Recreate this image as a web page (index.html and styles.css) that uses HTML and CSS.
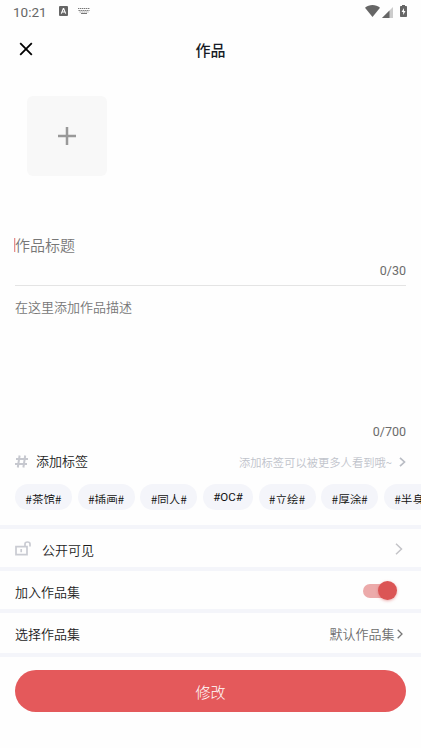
FILE: index.html
```html
<!DOCTYPE html>
<html lang="zh-CN">
<head>
<meta charset="utf-8">
<title>作品</title>
<link rel="stylesheet" href="styles.css">
</head>
<body>
<div class="status">
  <span class="clock">10:21</span>
  <svg class="st-a" width="9" height="10" viewBox="0 0 9 10"><rect width="9" height="10" rx="1" fill="#666"/><path d="M2.3 7.6 4.3 2.6h.4l2 5M3.1 6h2.8" fill="none" stroke="#fff" stroke-width="1.1"/></svg>
  <svg class="st-k" width="12" height="6" viewBox="0 0 12 6"><path d="M0 .5h12M.5 2.500h11" fill="none" stroke="#777" stroke-width="1" stroke-dasharray="1.400 .600"/><path d="M1.500 4h9" stroke="#999" stroke-width="1" stroke-dasharray="1.400 .600"/><path d="M3 5.500h6" stroke="#777" stroke-width="1"/></svg>
  <span class="grow"></span>
  <svg class="st-w" width="15" height="12" viewBox="0 0 15 12"><path d="M0 2.8C4.2-.9 10.8-.9 15 2.8L7.5 12z" fill="#666"/></svg>
  <svg class="st-s" width="11" height="11" viewBox="0 0 11 11"><path d="M11 0v11H0z" fill="#ccc"/><path d="M7.500 3.500V11H0z" fill="#666"/></svg>
  <svg class="st-b" width="7" height="12" viewBox="0 0 7 12"><path d="M2 0h3v1h1.200q.8 0 .8.8v9.400q0 .8-.8.8H.8Q0 12 0 11.200V1.800Q0 1 .8 1H2z" fill="#666"/><path d="M4 3 1.600 7H3.200v3L5.500 6H4z" fill="#fff"/></svg>
</div>
<header class="header">
  <svg class="close" width="14" height="14" viewBox="0 0 14 14"><path d="M1.200 1.200 12.800 12.800M12.800 1.200 1.200 12.800" stroke="#000" stroke-width="1.800"/></svg>
  <h1>作品</h1>
</header>
<div class="upload"><svg width="20" height="20" viewBox="0 0 20 20"><path d="M10 1v18M1 10h18" stroke="#999" stroke-width="2.500"/></svg></div>
<section class="field title-field">
  <div class="caret-line"><i class="caret"></i><span>作品标题</span></div>
  <div class="count">0/30</div>
</section>
<section class="field desc-field">
  <div class="desc">在这里添加作品描述</div>
  <div class="count">0/700</div>
</section>
<div class="tag-head">
  <svg class="hash" width="13" height="13" viewBox="0 0 13 13"><path d="M4.600.5 2.800 12.500M10.200.5 8.400 12.500M1 3.900h12M0 9h12" fill="none" stroke="#c6c8cf" stroke-width="2"/></svg>
  <span class="tag-title">添加标签</span>
  <span class="hint">添加标签可以被更多人看到哦~</span>
  <svg class="hint-arrow" width="7" height="10" viewBox="0 0 7 10"><path d="M1 .8 5.500 5 1 9.200" fill="none" stroke="#b9bcc4" stroke-width="1.700"/></svg>
</div>
<div class="chips">
  <div class="chip"><span>#茶馆#</span></div>
  <div class="chip"><span>#插画#</span></div>
  <div class="chip"><span>#同人#</span></div>
  <div class="chip latin"><span>#OC#</span></div>
  <div class="chip"><span>#立绘#</span></div>
  <div class="chip"><span>#厚涂#</span></div>
  <div class="chip"><span>#半身#</span></div>
</div>
<div class="row">
  <svg class="lock" width="16" height="15" viewBox="0 0 16 15"><path d="M1 5.700h11v8H1zM10 5.500V3q0-2 2.500-2T15 3v2.500" fill="none" stroke="#c9cbd2" stroke-width="1.700"/><path d="M6.200 8v3.200" stroke="#c9cbd2" stroke-width="1.700"/></svg>
  <span>公开可见</span>
  <svg class="row-arrow" width="8" height="12" viewBox="0 0 8 12"><path d="M1 .7 6.500 6 1 11.300" fill="none" stroke="#c4c4c8" stroke-width="1.500"/></svg>
</div>
<div class="row">
  <span>加入作品集</span>
  <div class="switch"><i></i></div>
</div>
<div class="row">
  <span>选择作品集</span>
  <span class="value">默认作品集</span>
  <svg class="value-arrow" width="6" height="10" viewBox="0 0 6 10"><path d="M.7.700 5 5 .7 9.300" fill="none" stroke="#777" stroke-width="1.300"/></svg>
</div>
<div class="footer"><div class="submit">修改</div></div>
</body>
</html>
```
FILE: styles.css
```css
* { box-sizing: border-box; }
body {
  margin: 0;
  width: 421px;
  height: 748px;
  overflow: hidden;
  background: #fefefe;
  color: #1c1c1c;
  font-family: Roboto, "Noto Sans CJK SC", sans-serif;
  font-size: 13px;
  font-weight: 350;
}
svg { display: block; flex: none; }
.grow { flex: 1; }
.status { display: flex; align-items: center; height: 24px; padding: 0 14px 1px 13px; }
.clock { width: 46px; font-size: 13.5px; line-height: 24px; font-weight: 400; color: #666; }
.st-a { margin-bottom: 1px; }
.st-k { margin: 0 0 1px 10px; }
.st-w { margin-bottom: 1px; }
.st-s { margin: 1px 7px 0 2px; }
.st-b { margin-bottom: 1px; }
.header { display: grid; grid-template-columns: 60px 1fr 60px; align-items: center; height: 52px; }
.close { margin: 0 0 3px 19px; }
.header h1 { margin: 0; padding-top: 1px; font-size: 15px; line-height: 24px; font-weight: 500; text-align: center; color: #161b26; }
.upload {
  display: flex;
  align-items: center;
  justify-content: center;
  width: 80px;
  height: 80px;
  margin: 20px 0 0 27px;
  border-radius: 6px;
  background: #f8f8f8;
}
.field { margin: 0 15px; color: #777; }
.count { font-size: 12.500px; line-height: 16px; font-weight: 400; text-align: right; color: #6c6c6c; }
.title-field { margin-top: 58px; height: 52px; border-bottom: 1px solid #e4e4e4; }
.caret-line { display: flex; height: 29px; font-size: 15px; line-height: 24px; }
.caret { width: 1px; height: 14px; margin: 4px 0 0 -1px; background: #e58e8e; box-shadow: 1px 0 rgba(229, 142, 142, .3); }
.desc-field { height: 158px; display: flex; flex-direction: column; justify-content: space-between; padding: 12px 0 4px; }
.desc { line-height: 20px; }
.tag-head { display: flex; align-items: center; height: 36px; padding: 0 15px; }
.hash { margin-bottom: 2px; }
.tag-title { margin-left: 8px; line-height: 20px; }
.hint { margin: 0 0 1px auto; font-family: "Noto Sans CJK SC", sans-serif; font-size: 11.300px; line-height: 18px; color: #c0c3cb; }
.hint-arrow { margin: 0 0 1px 7px; }
.chips { display: flex; gap: 5.700px; height: 45px; padding: 4px 0 0 15px; overflow: hidden; }
.chip { flex: none; width: 57px; height: 26px; padding-top: 6px; border-radius: 13px; background: #f4f5fa; text-align: center; color: #111; font-family: "Noto Sans CJK SC", sans-serif; font-size: 11.600px; }
.chip span { display: block; height: 14px; line-height: 18px; overflow: hidden; }
.latin { width: 49.800px; }
.latin span { font-family: Roboto, sans-serif; font-size: 11.500px; font-weight: 400; line-height: 15px; }
.row { display: flex; align-items: center; height: 42.200px; padding: 3px 15px 0; border-top: 4px solid #f4f5fa; }
.lock { margin: 0 11px 2px 0; }
.row-arrow { margin: 0 3px 2px auto; }
.switch { position: relative; width: 33px; height: 14px; margin: 0 10px 1px auto; border-radius: 7px; background: #ecaaaa; }
.switch i { position: absolute; top: -3px; right: -1px; width: 19px; height: 19px; border-radius: 50%; background: #db5555; box-shadow: 0 1px 3px rgba(219, 85, 85, .5); }
.value { margin-left: auto; color: #6c6c6c; }
.value-arrow { margin: 0 3px 0 2.500px; }
.footer { padding: 13px 15px 0; border-top: 4px solid #f4f5fa; margin-top: 1.400px; }
.submit { height: 42px; border-radius: 21px; background: #e4595b; color: #fff; font-size: 15px; font-weight: 300; line-height: 46px; text-align: center; }
```
